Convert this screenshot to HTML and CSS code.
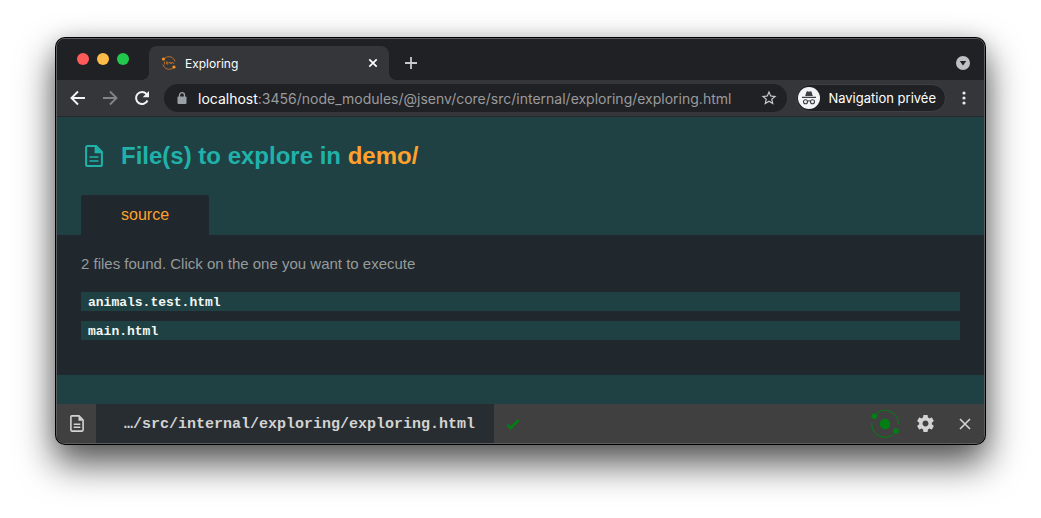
FILE: index.html
```html
<!DOCTYPE html>
<html lang="en">
<head>
<meta charset="utf-8">
<title>Exploring</title>
<link rel="stylesheet" href="styles.css">
</head>
<body>
<div class="window">
  <header class="tabstrip">
    <div class="lights"><span class="light red"></span><span class="light yellow"></span><span class="light green"></span></div>
    <div class="browser-tab">
      <svg class="favicon" viewBox="0 0 16 16" width="16" height="16" fill="none" stroke="#b8702a"><path d="M4 3a6.3 6.3 0 0 1 10 3.500M12 13A6.300 6.300 0 0 1 2 9.500"/><path d="M3.500 6.500v3M5.500 7v2h1.500V7H5.500M8 7.500h1.500v1.500M10.500 9V7.500H12l1 1.500" stroke-width=".9"/><circle cx="2.500" cy="4" r="1.600" fill="#fb9224" stroke="none"/><circle cx="13" cy="12" r="1.600" fill="#fb9224" stroke="none"/></svg>
      <span class="tab-title">Exploring</span>
      <button class="icon-btn" aria-label="Close tab"><svg viewBox="0 0 10 10" width="10" height="10" stroke="#fff" stroke-width="1.700"><path d="M1.300 1.300l7.400 7.400M8.700 1.300L1.300 8.700"/></svg></button>
    </div>
    <button class="icon-btn new-tab" aria-label="New tab"><svg viewBox="0 0 14 14" width="14" height="14" stroke="#c8cacd" stroke-width="1.800"><path d="M7 1v12M1 7h12"/></svg></button>
    <button class="icon-btn tab-search" aria-label="Search tabs"><svg viewBox="0 0 14 14" width="14" height="14"><circle cx="7" cy="7" r="7" fill="#bdc1c6"/><path d="M3.800 5h6.400L7 9.500z" fill="#202124"/></svg></button>
  </header>
  <nav class="toolbar">
    <button class="icon-btn" aria-label="Back"><svg viewBox="0 0 16 16" width="16" height="16" fill="none" stroke="#f1f3f4" stroke-width="1.900"><path d="M15 8H2M8 1.500L1.500 8 8 14.500"/></svg></button>
    <button class="icon-btn" aria-label="Forward"><svg viewBox="0 0 16 16" width="16" height="16" fill="none" stroke="#828386" stroke-width="1.900"><path d="M1 8h13M8 1.500L14.500 8 8 14.500"/></svg></button>
    <button class="icon-btn" aria-label="Reload"><svg viewBox="0 0 16 16" width="16" height="16" fill="none" stroke="#f1f3f4" stroke-width="2"><path d="M13.500 10.500A6 6 0 1 1 12.500 4"/><path d="M15 1v6.300H8.700z" fill="#f1f3f4" stroke="none"/></svg></button>
    <div class="address">
      <svg viewBox="0 0 10 12" width="10" height="12"><path d="M2.500 5V3.200a2.500 2.500 0 0 1 5 0V5" fill="none" stroke="#9aa0a6" stroke-width="1.300"/><rect x=".5" y="4.500" width="9" height="7.500" rx="1" fill="#9aa0a6"/></svg>
      <span class="url"><b>localhost</b>:3456/node_modules/@jsenv/core/src/internal/exploring/exploring.html</span>
      <button class="icon-btn star" aria-label="Bookmark"><svg viewBox="0 0 24 24" width="18" height="18" fill="#c6c8cb"><path d="M22 9.240l-7.190-.62L12 2 9.190 8.630 2 9.240l5.460 4.730L5.820 21 12 17.270 18.180 21l-1.630-7.030L22 9.240zM12 15.400l-3.760 2.270 1-4.280-3.320-2.880 4.380-.38L12 6.100l1.710 4.040 4.380.38-3.320 2.880 1 4.280L12 15.400z"/></svg></button>
    </div>
    <button class="profile"><svg viewBox="0 0 22 22" width="22" height="22"><circle cx="11" cy="11" r="11" fill="#f1f3f4"/><path d="M7.200 9L8.500 4.800q.3-.7 1-.5l1.500.4 1.500-.4q.7-.2 1 .5L14.800 9z" fill="#3c4043"/><path d="M4 10.400h14M9.500 14.300q1.500-1 3 0" fill="none" stroke="#3c4043" stroke-width="1.100"/><circle cx="7.500" cy="14.700" r="2" fill="none" stroke="#3c4043" stroke-width="1.100"/><circle cx="14.500" cy="14.700" r="2" fill="none" stroke="#3c4043" stroke-width="1.100"/></svg>Navigation privée</button>
    <button class="icon-btn menu" aria-label="Menu"><svg viewBox="0 0 4 14" width="4" height="14" fill="#e8eaed"><circle cx="2" cy="2" r="1.600"/><circle cx="2" cy="7" r="1.600"/><circle cx="2" cy="12" r="1.600"/></svg></button>
  </nav>
  <main class="page">
    <h1 class="heading">
      <svg viewBox="0 0 18 22" width="18" height="22"><path d="M2.500 1.100h8.700l5.700 5.700v13.100a1 1 0 0 1-1 1H2.100a1 1 0 0 1-1-1V2.500a1.400 1.400 0 0 1 1.400-1.400z" fill="none" stroke="#20b2aa" stroke-width="2"/><path d="M10.500 1.500v5.800h6M4.500 12h9M4.500 16h9" fill="none" stroke="#20b2aa" stroke-width="1.700"/><path d="M11 2v5h5z" fill="#20b2aa"/></svg>
      <span>File(s) to explore in <a class="folder" href="#">demo/</a></span>
    </h1>
    <div class="groups"><button class="group">source</button></div>
    <section class="panel">
      <p class="summary">2 files found. Click on the one you want to execute</p>
      <ul class="files">
        <li><a class="file" href="#">animals.test.html</a></li>
        <li><a class="file" href="#">main.html</a></li>
      </ul>
    </section>
  </main>
  <footer class="jsbar">
    <button class="icon-btn square" aria-label="File list"><svg viewBox="0 0 14 17" width="14" height="17"><path d="M1.800.9H9l4.100 4.200v10a1 1 0 0 1-1 1H1.900a1 1 0 0 1-1-1V1.800a.9.9 0 0 1 .9-.9z" fill="none" stroke="#d3d3d3" stroke-width="1.600"/><path d="M8.500 1v4.800H13z" fill="#d3d3d3"/><path d="M3.700 9.200h6.600M3.700 12.300h6.600" stroke="#d3d3d3" stroke-width="1.500"/></svg></button>
    <a class="current" href="#">…/src/internal/exploring/exploring.html</a>
    <svg class="check" viewBox="0 0 14 12" width="14" height="12" fill="none" stroke="#008013" stroke-width="2.500"><path d="M1.200 6.800L4.700 10 12.700 1.800"/></svg>
    <button class="icon-btn orbit" aria-label="Live reload"><svg viewBox="0 0 30 28" width="30" height="28" fill="#008013"><circle cx="15" cy="14" r="5.200"/><circle cx="4.300" cy="6.200" r="2.800"/><circle cx="26" cy="21" r="2.800"/><path d="M6 3.800A13.300 13.300 0 0 1 28.300 14M24.500 23.300A13.300 13.300 0 0 1 1.700 13" fill="none" stroke="#008013" stroke-width="1"/></svg></button>
    <button class="icon-btn square" aria-label="Settings"><svg viewBox="2 2 20 20" width="17" height="17" fill="#d3d3d3"><path d="M19.430 12.980c.04-.32.07-.64.07-.98s-.03-.66-.07-.98l2.110-1.650c.19-.15.24-.42.12-.64l-2-3.460c-.12-.22-.39-.3-.61-.22l-2.490 1c-.52-.4-1.080-.73-1.690-.98l-.38-2.650C14.460 2.180 14.250 2 14 2h-4c-.25 0-.46.18-.49.42l-.38 2.650c-.61.25-1.170.59-1.690.98l-2.490-1c-.23-.09-.49 0-.61.22l-2 3.460c-.13.22-.07.49.12.64l2.110 1.650c-.04.32-.07.65-.07.98s.03.66.07.98l-2.110 1.650c-.19.15-.24.42-.12.64l2 3.460c.12.22.39.3.61.22l2.490-1c.52.4 1.080.73 1.690.98l.38 2.650c.03.24.24.42.49.42h4c.25 0 .46-.18.49-.42l.38-2.650c.61-.25 1.170-.59 1.690-.98l2.490 1c.23.09.49 0 .61-.22l2-3.460c.12-.22.07-.49-.12-.64l-2.110-1.650zM12 15.500c-1.930 0-3.500-1.570-3.500-3.500s1.570-3.500 3.500-3.500 3.500 1.570 3.500 3.500-1.570 3.500-3.500 3.500z"/></svg></button>
    <button class="icon-btn square" aria-label="Close"><svg viewBox="0 0 12 12" width="12" height="12" stroke="#d3d3d3" stroke-width="1.600"><path d="M1 1l10 10M11 1L1 11"/></svg></button>
  </footer>
</div>
</body>
</html>
```
FILE: styles.css
```css
* { box-sizing: border-box; }
body {
  margin: 0;
  min-height: 100vh;
  padding: 38px 56px 74px;
  display: flex;
  background: #fff;
  font-family: "Liberation Sans", Arial, sans-serif;
}
button { border: 0; padding: 0; background: none; font: inherit; color: inherit; cursor: pointer; }
a { color: inherit; text-decoration: none; }
svg { display: block; flex: none; }
.icon-btn { display: flex; align-items: center; justify-content: center; flex: none; }

.window {
  flex: 1;
  min-width: 0;
  display: flex;
  flex-direction: column;
  overflow: hidden;
  border: 1px solid #5b5d60;
  border-radius: 9px;
  background: #202124;
  box-shadow: 0 0 0 1px #000, 0 18px 36px 2px rgba(0, 0, 0, .66), 0 0 20px rgba(0, 0, 0, .12);
}

.tabstrip { height: 41px; display: flex; align-items: flex-end; background: #202124; font-family: Inter, sans-serif; }
.lights { display: flex; gap: 8px; padding: 0 20px 15px; }
.light { width: 12px; height: 12px; border-radius: 50%; }
.red { background: #ff5a5a; }
.yellow { background: #ffbb48; }
.green { background: #22c84b; }
.browser-tab {
  position: relative;
  width: 240px;
  height: 34px;
  padding: 0 11px 0 12px;
  display: flex;
  align-items: center;
  gap: 8px;
  border-radius: 8px 8px 0 0;
  background: #35363a;
  color: #fff;
  font-size: 12px;
}
.browser-tab::before, .browser-tab::after {
  content: "";
  position: absolute;
  bottom: 0;
  width: 8px;
  height: 8px;
}
.browser-tab::before { left: -8px; background: radial-gradient(circle at 0 0, #202124 8px, #35363a 8px); }
.browser-tab::after { right: -8px; background: radial-gradient(circle at 100% 0, #202124 8px, #35363a 8px); }
.tab-title { flex: 1; }
.new-tab { height: 34px; margin-left: 15px; }
.tab-search { height: 34px; margin: 0 14px 0 auto; }

.toolbar {
  height: 37px;
  display: flex;
  align-items: center;
  padding: 0 18px 0 13px;
  gap: 16px;
  background: #35363a;
  border-bottom: 1px solid #29292c;
  font-family: Inter, sans-serif;
}
.address {
  flex: 1;
  min-width: 0;
  height: 28px;
  margin-left: -2px;
  padding: 0 9px 0 13px;
  display: flex;
  align-items: center;
  gap: 11px;
  border-radius: 14px;
  background: #202124;
}
.url { flex: 1; min-width: 0; overflow: hidden; white-space: nowrap; font-size: 14px; color: #9a9b9d; }
.url b { font-weight: 400; color: #fff; }
.profile {
  height: 28px;
  margin-left: -7px;
  padding: 0 9px 0 1px;
  display: flex;
  align-items: center;
  gap: 8px;
  border: 1px solid #3f4043;
  border-radius: 14px;
  background: #202124;
  color: #fff;
  font-size: 13px;
  white-space: nowrap;
}

.page { flex: 1; background: #204143; }
.heading {
  margin: 0;
  padding: 25px 28px 25px;
  display: flex;
  align-items: center;
  gap: 18px;
  color: #20b2aa;
  font-size: 24px;
  line-height: 28px;
}
.folder { color: #ffa12c; }
.groups { display: flex; padding: 0 24px; }
.group {
  height: 40px;
  padding: 0 40px;
  border-radius: 2px 2px 0 0;
  background: #20272d;
  color: #ffa12c;
  font-size: 16px;
}
.panel { padding: 20px 24px 35px; background: #20272d; }
.summary { margin: 0 0 19px; color: #969b9b; font-size: 15px; line-height: 18px; }
.files { margin: 0; padding: 0; list-style: none; display: grid; gap: 10px; }
.file {
  display: block;
  padding: 2px 7px 0;
  background: #204143;
  color: #f2f7f7;
  font: bold 13px/17px "Liberation Mono", monospace;
}

.jsbar { height: 39px; display: flex; align-items: center; background: #404040; color: #d3d3d3; }
.square { width: 39px; height: 100%; }
.current {
  align-self: stretch;
  padding: 0 19px 0 28px;
  background: #282d31;
  font: bold 15px/42px "Liberation Mono", monospace;
  white-space: nowrap;
}
.check { margin-left: 12px; }
.orbit { width: 42px; margin-left: auto; }
```
